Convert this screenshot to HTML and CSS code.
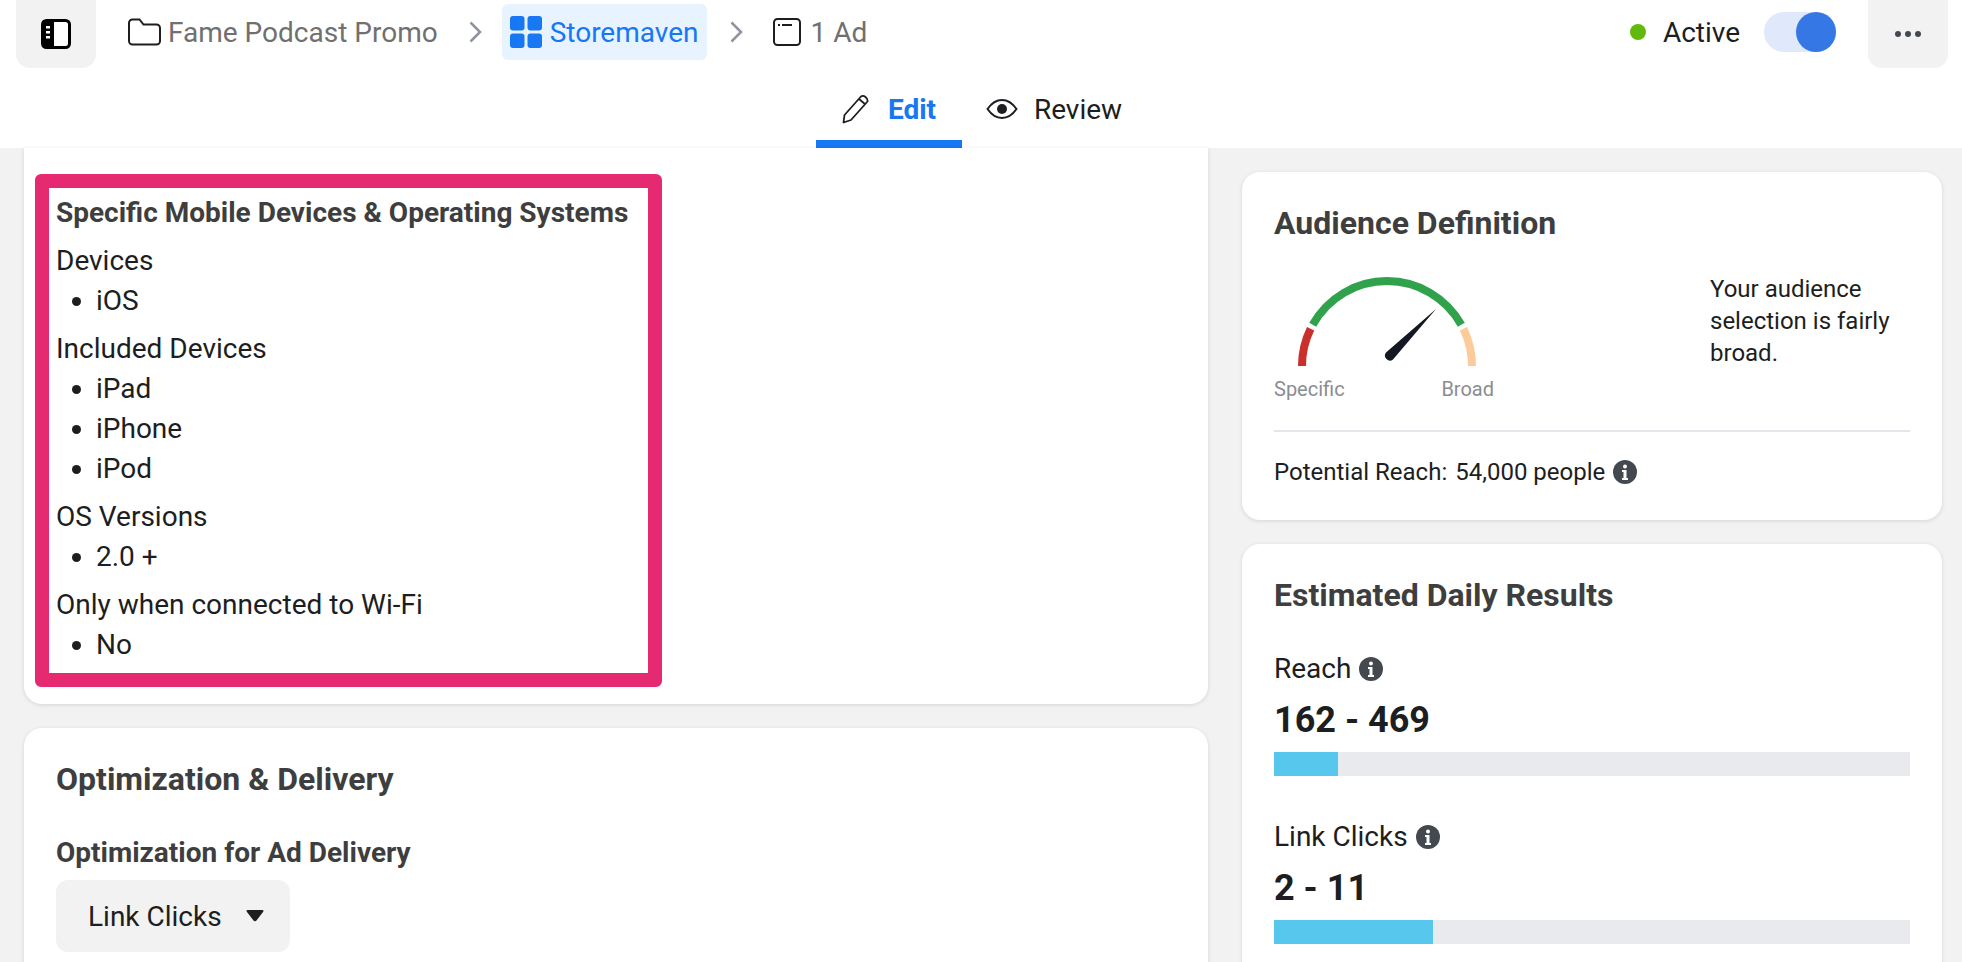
FILE: index.html
```html
<!DOCTYPE html>
<html lang="en">
<head>
  <meta charset="UTF-8">
  <title>Storemaven - Edit</title>
  <link rel="stylesheet" href="styles.css">
</head>
<body>
  <header class="header">
    <div class="topbar">
      <button class="square-btn">
        <svg width="30" height="30" viewBox="0 0 30 30"><rect x="1.5" y="1.5" width="27" height="27" rx="4" fill="#fff" stroke="#000" stroke-width="3"/><path d="M4 1h9v28H4a3 3 0 0 1-3-3V4a3 3 0 0 1 3-3z" fill="#000"/><rect x="5" y="7" width="4" height="2.5" fill="#fff"/><rect x="5" y="12" width="4" height="2.5" fill="#fff"/><rect x="5" y="17" width="4" height="2.5" fill="#fff"/></svg>
      </button>
      <nav class="crumbs">
        <span class="crumb">
          <svg width="33" height="28" viewBox="0 0 33 28"><path d="M1 5a3.500 3.500 0 0 1 3.500-3.500h7l4 5h13a3.500 3.500 0 0 1 3.500 3.500v13a3.500 3.500 0 0 1-3.500 3.500h-24A3.500 3.500 0 0 1 1 23z" fill="none" stroke="#1c1e21" stroke-width="2"/></svg>
          Fame Podcast Promo
        </span>
        <svg class="chevron" width="13" height="22" viewBox="0 0 13 22"><path d="M1.500 1.500l9.500 9.500-9.500 9.500" fill="none" stroke="#8d949e" stroke-width="2.500"/></svg>
        <span class="crumb crumb-current">
          <svg width="32" height="32" viewBox="0 0 32 32" fill="#1877f2"><rect width="14.500" height="14.500" rx="3"/><rect x="17.500" width="14.500" height="14.500" rx="3"/><rect y="17.500" width="14.500" height="14.500" rx="3"/><rect x="17.500" y="17.500" width="14.500" height="14.500" rx="3"/></svg>
          Storemaven
        </span>
        <svg class="chevron" width="13" height="22" viewBox="0 0 13 22"><path d="M1.500 1.500l9.500 9.500-9.500 9.500" fill="none" stroke="#8d949e" stroke-width="2.500"/></svg>
        <span class="crumb crumb-last">
          <svg width="28" height="28" viewBox="0 0 28 28"><rect x="1" y="1" width="26" height="26" rx="3.500" fill="none" stroke="#1c1e21" stroke-width="2"/><rect x="5" y="6" width="2" height="2" fill="#1c1e21"/><rect x="9" y="6" width="10" height="2" fill="#1c1e21"/></svg>
          1 Ad
        </span>
      </nav>
      <div class="status">
        <span class="status-dot"></span>
        <span class="status-label">Active</span>
        <span class="toggle"><span class="toggle-knob"></span></span>
      </div>
      <button class="square-btn more-btn">
        <svg width="28" height="8" viewBox="0 0 28 8" fill="#444950"><circle cx="4" cy="4" r="3"/><circle cx="14" cy="4" r="3"/><circle cx="24" cy="4" r="3"/></svg>
      </button>
    </div>
    <div class="tabs">
      <div class="tab tab-active">
        <svg width="30" height="30" viewBox="0 0 30 30"><path d="M2.500 28.500l1-7.500L20 2.500q2-1.500 4.500 .5t2 4.500L10 26z M18 5l6.500 5.500" fill="none" stroke="#1c1e21" stroke-width="1.800" stroke-linejoin="round"/></svg>
        <span>Edit</span>
      </div>
      <div class="tab">
        <svg width="32" height="22" viewBox="0 0 32 22"><path d="M1.500 11C6 4.500 10.500 2 16 2s10 2.500 14.500 9C26 17.500 21.500 20 16 20S6 17.500 1.500 11z" fill="none" stroke="#1c1e21" stroke-width="2"/><circle cx="16" cy="11" r="5" fill="#1c1e21"/></svg>
        <span>Review</span>
      </div>
    </div>
  </header>

  <main class="content">
    <div class="col">
      <section class="card card-devices">
        <div class="highlight">
          <h4 class="sub-title">Specific Mobile Devices &amp; Operating Systems</h4>
          <div class="group">Devices</div>
          <ul><li>iOS</li></ul>
          <div class="group">Included Devices</div>
          <ul><li>iPad</li><li>iPhone</li><li>iPod</li></ul>
          <div class="group">OS Versions</div>
          <ul><li>2.0 +</li></ul>
          <div class="group">Only when connected to Wi-Fi</div>
          <ul><li>No</li></ul>
        </div>
      </section>
      <section class="card card-delivery">
        <h3 class="card-title">Optimization &amp; Delivery</h3>
        <h4 class="sub-title delivery-label">Optimization for Ad Delivery</h4>
        <button class="select-btn">
          Link Clicks
          <svg width="18" height="12" viewBox="0 0 18 12"><path d="M2 0h14q2.500 0 1 2l-6.500 8.500q-1.500 1.500-3 0L1 2Q-.5 0 2 0z" fill="#1c1e21"/></svg>
        </button>
      </section>
    </div>

    <div class="col col-side">
      <section class="card card-audience">
        <h3 class="card-title">Audience Definition</h3>
        <div class="gauge-row">
          <div class="gauge">
            <svg width="186" height="97" viewBox="0 0 186 97" fill="none" stroke-width="8">
              <path d="M8 93A85 85 0 0 1 16.600 55.700" stroke="#c9302c"/>
              <path d="M18.700 51.800A85 85 0 0 1 167.300 51.800" stroke="#31a24c"/>
              <path d="M169.400 55.700A85 85 0 0 1 178 93" stroke="#fdcb9a"/>
              <path d="M142 36L99 86.500A5 5 0 0 1 92 79.500Z" fill="#141823" stroke="none"/>
            </svg>
            <div class="gauge-labels"><span>Specific</span><span>Broad</span></div>
          </div>
          <p class="gauge-note">Your audience selection is fairly broad.</p>
        </div>
        <div class="reach-line">
          <span>Potential Reach:</span>
          <span>54,000 people</span>
          <svg class="info" width="24" height="24" viewBox="0 0 24 24"><circle cx="12" cy="12" r="12" fill="#444950"/><circle cx="12" cy="6.500" r="2" fill="#fff"/><path d="M9 10h4.500v8H15v2H9v-2h1.500v-6H9z" fill="#fff"/></svg>
        </div>
      </section>
      <section class="card card-results">
        <h3 class="card-title">Estimated Daily Results</h3>
        <div class="metric">
          <div class="metric-label">Reach
            <svg class="info" width="24" height="24" viewBox="0 0 24 24"><circle cx="12" cy="12" r="12" fill="#444950"/><circle cx="12" cy="6.500" r="2" fill="#fff"/><path d="M9 10h4.500v8H15v2H9v-2h1.500v-6H9z" fill="#fff"/></svg>
          </div>
          <div class="metric-value">162 - 469</div>
          <div class="bar"><div class="bar-fill" style="width:10%"></div></div>
        </div>
        <div class="metric">
          <div class="metric-label">Link Clicks
            <svg class="info" width="24" height="24" viewBox="0 0 24 24"><circle cx="12" cy="12" r="12" fill="#444950"/><circle cx="12" cy="6.500" r="2" fill="#fff"/><path d="M9 10h4.500v8H15v2H9v-2h1.500v-6H9z" fill="#fff"/></svg>
          </div>
          <div class="metric-value">2 - 11</div>
          <div class="bar"><div class="bar-fill" style="width:25%"></div></div>
        </div>
      </section>
    </div>
  </main>
</body>
</html>
```

FILE: styles.css
```css
/* Reset + base */
* { margin:0; padding:0; box-sizing:border-box; }
html, body { height:100%; overflow:hidden; }
body {
  background:#f2f2f2;
  color:#1c1e21;
  font-family:Roboto, "Liberation Sans", sans-serif;
  font-size:28px;
}
button { font:inherit; color:inherit; border:0; }

/* Header */
.header { height:148px; background:#fff; overflow:hidden; }
.topbar { display:flex; align-items:center; height:68px; padding:0 14px 0 16px; }
.square-btn {
  display:flex; align-items:center; justify-content:center;
  width:80px; height:86px; margin-top:-18px; padding-top:18px;
  background:#f2f2f2; border-radius:14px;
}
.crumbs { display:flex; align-items:center; margin:-4px 0 0 32px; color:#707070; }
.crumb { display:flex; align-items:center; gap:7px; }
.crumb-current {
  gap:8px;
  height:56px; padding:0 8px;
  background:#e7f3ff; border-radius:6px; color:#1877f2;
}
.crumb-last { gap:10px; }
.chevron { margin:0 20px 0 31px; }
.crumb-current + .chevron { margin:0 30px 0 23px; }
.status { display:flex; align-items:center; margin:-4px 32px 0 auto; }
.status-dot { width:16px; height:16px; border-radius:50%; background:#63b80e; }
.status-label { margin:0 24px 0 17px; }
.toggle { display:flex; justify-content:flex-end; width:72px; height:40px; background:#dfe9fb; border-radius:20px; }
.toggle-knob { width:40px; height:40px; border-radius:50%; background:#3578e5; }

/* Tabs */
.tabs { display:flex; justify-content:center; height:80px; }
.tab { display:flex; align-items:center; gap:16px; height:80px; padding:2px 24px 0; }
.tab-active { color:#1877f2; font-weight:700; border-bottom:8px solid #1877f2; gap:17px; padding:10px 0 0 25px; width:146px; }

/* Main grid */
.content {
  display:grid;
  grid-template-columns:1184px 700px;
  column-gap:34px;
  padding-left:24px;
  align-items:start;
}
.col { display:flex; flex-direction:column; gap:24px; }
.col-side { padding-top:24px; }
.card {
  background:#fff;
  border-radius:18px;
  box-shadow:0 1px 4px rgba(0,0,0,0.12);
}
.card-title { font-size:32px; font-weight:700; color:#3e3e3e; line-height:36px; }
.sub-title { font-size:28px; font-weight:700; color:#3e3e3e; line-height:36px; }

/* Device targeting box */
.card-devices { padding:26px 0 17px 11px; border-radius:0 0 18px 18px; }
.highlight {
  width:627px;
  padding:7px 7px 8px 7px;
  border:14px solid #e52a72;
  border-radius:6px;
}
.group { line-height:40px; margin-top:8px; }
.highlight .sub-title + .group { margin-top:10px; }
.highlight ul { padding-left:40px; line-height:40px; }

/* Delivery card */
.card-delivery { height:300px; padding:33px 32px; }
.delivery-label { margin-top:38px; }
.select-btn {
  display:flex; align-items:center; gap:24px;
  height:72px; margin-top:9px; padding:0 26px 0 32px;
  background:#f2f2f2; border-radius:12px;
}

/* Audience card */
.card-audience { height:348px; padding:33px 32px 0; }
.gauge-row { display:flex; margin-top:32px; }
.gauge { display:flex; flex-direction:column; width:222px; padding-left:20px; }
.gauge-labels {
  display:flex; justify-content:space-between;
  width:220px; margin:7px 0 0 -20px;
  font-size:20px; line-height:24px; color:#8a8d91;
}
.gauge-note { width:200px; margin:0 0 0 214px; font-size:24px; line-height:32px; }
.reach-line {
  display:flex; align-items:center; gap:8px;
  margin-top:29px; padding-top:24px; border-top:2px solid #e4e6eb;
  font-size:24px; line-height:32px;
}

/* Results card */
.card-results { height:600px; padding:33px 32px; }
.metric { margin-top:38px; }
.metric + .metric { margin-top:43px; }
.metric-label { display:flex; align-items:center; gap:8px; line-height:36px; }
.metric-value { margin-top:11px; font-size:36px; line-height:44px; font-weight:700; }
.bar { height:24px; margin-top:10px; background:#e9eaed; }
.bar-fill { height:100%; background:#57c7ee; }
```
